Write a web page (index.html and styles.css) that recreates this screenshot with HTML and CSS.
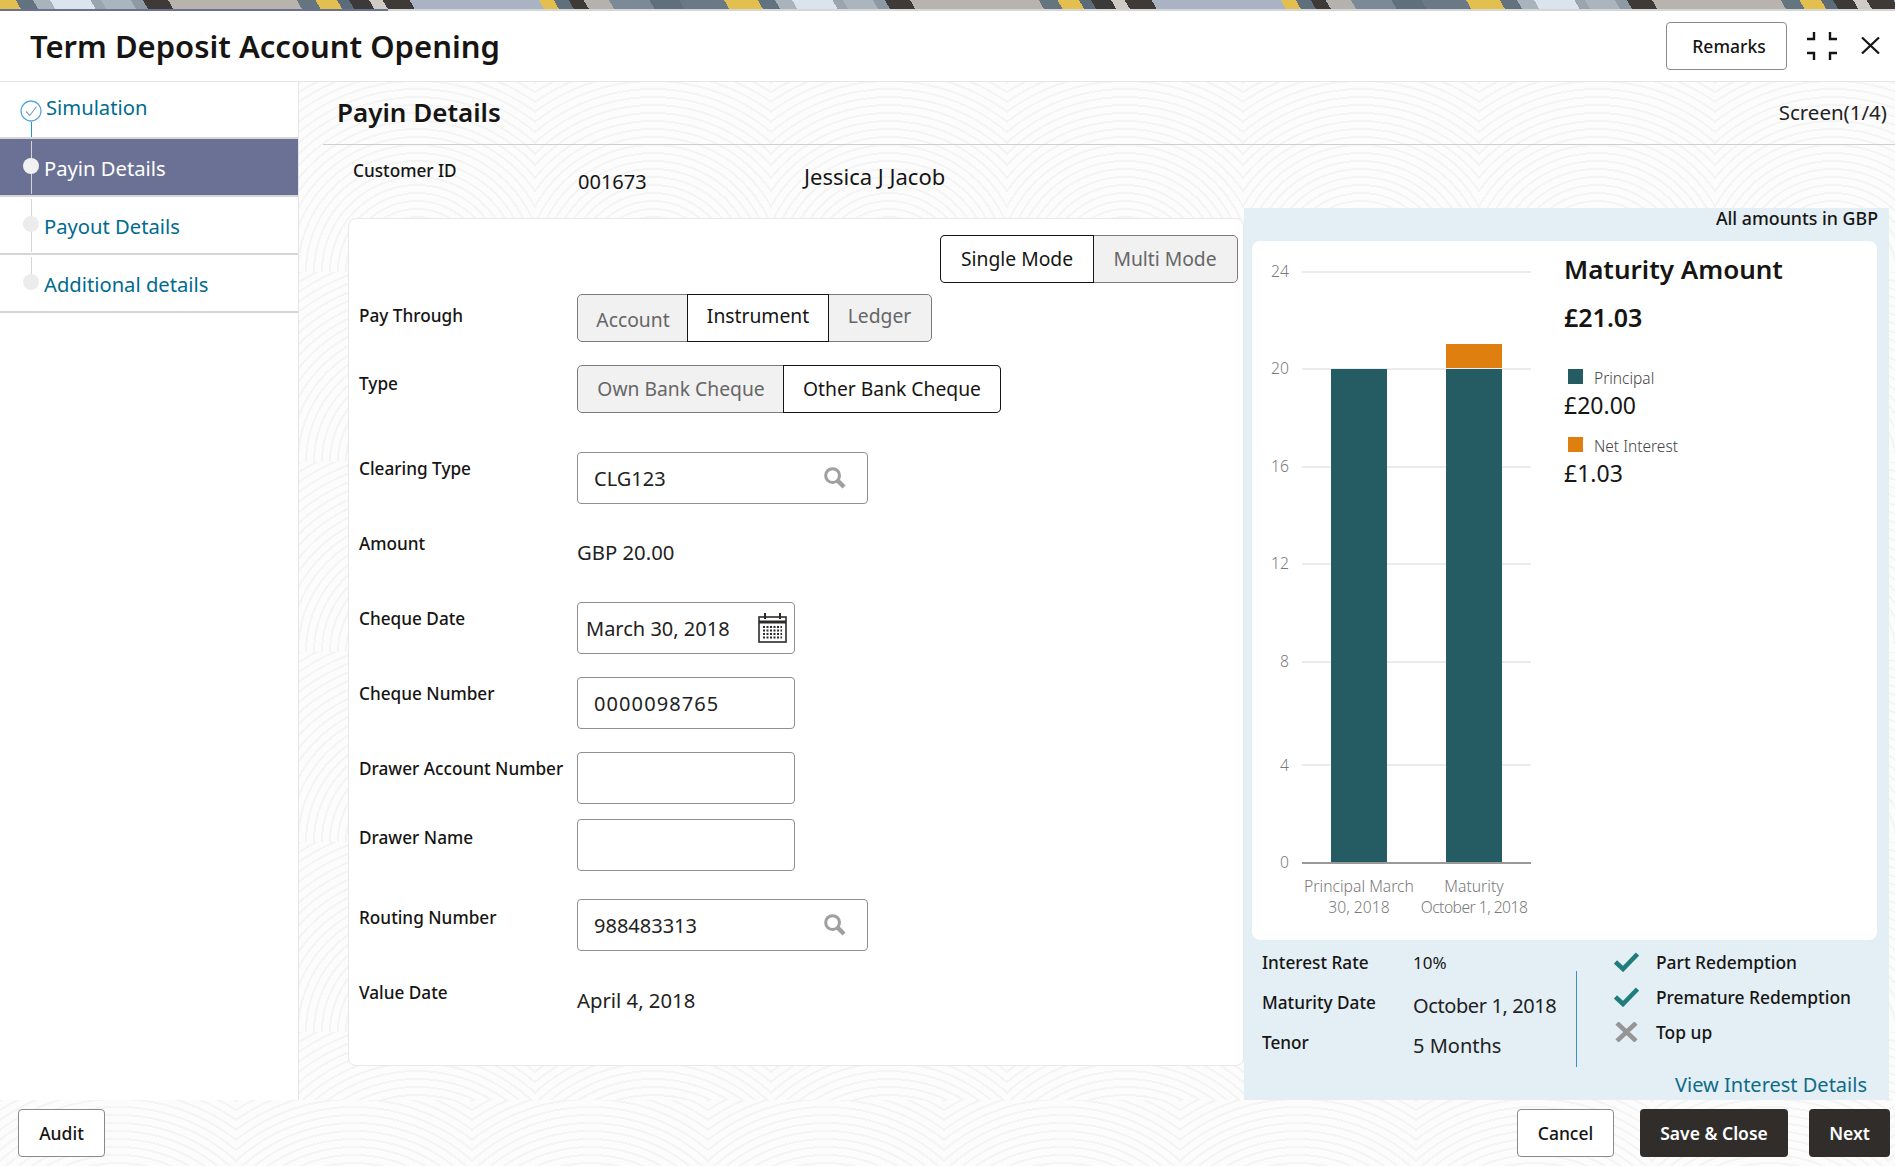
FILE: index.html
```html
<!DOCTYPE html>
<html lang="en">
<head>
<meta charset="utf-8">
<title>Term Deposit Account Opening</title>
<link rel="stylesheet" href="styles.css">
</head>
<body>
<div class="banner"></div>
<div class="progress"><div class="progress-fill"></div></div>
<div class="modal">
  <header class="modal-head">
    <h1 class="modal-title">Term Deposit Account Opening</h1>
    <button class="btn btn-outline btn-remarks">Remarks</button>
    <svg class="icon-shrink" viewBox="0 0 30 28" width="30" height="28" fill="none" stroke="#161513" stroke-width="2.4"><path d="M0 7H7V0M30 7H23V0M0 21H7V28M30 21H23V28"/></svg>
    <svg class="icon-close" viewBox="0 0 19 17" width="19" height="17" fill="none" stroke="#161513" stroke-width="2.2"><path d="M1 0.5L18 16.5M18 0.5L1 16.5"/></svg>
  </header>
  <div class="modal-body">
    <nav class="steps">
      <div class="step step-first">
        <svg class="step-check" viewBox="0 0 22 22" width="22" height="22" fill="none"><circle cx="11" cy="11" r="10" stroke="#56a6de" stroke-width="1.3"/><path d="M6 11.5L9.8 15.5L16.5 6.5" stroke="#7d9db5" stroke-width="1.1"/></svg>
        <a class="step-link step-link-first">Simulation</a>
      </div>
      <div class="step step-active"><span class="step-dot"></span><a class="step-link">Payin Details</a></div>
      <div class="step"><span class="step-dot"></span><a class="step-link">Payout Details</a></div>
      <div class="step step-last"><span class="step-dot"></span><a class="step-link">Additional details</a></div>
    </nav>
    <main class="main">
      <div class="main-head">
        <h2 class="main-title">Payin Details</h2>
        <span class="screen-no">Screen(1/4)</span>
      </div>
      <div class="customer">
        <span class="customer-label">Customer ID</span>
        <span class="customer-id">001673</span>
        <span class="customer-name">Jessica J Jacob</span>
      </div>
      <div class="content">
        <section class="form-card">
          <div class="mode-row">
            <div class="seg seg-mode">
              <span class="seg-item seg-on seg-single">Single Mode</span>
              <span class="seg-item seg-multi">Multi Mode</span>
            </div>
          </div>
          <div class="fields">
            <label class="field-label label-low">Pay Through</label>
            <div class="seg seg-pay">
              <span class="seg-item seg-account">Account</span>
              <span class="seg-item seg-on seg-instrument">Instrument</span>
              <span class="seg-item seg-ledger">Ledger</span>
            </div>
            <label class="field-label label-mid">Type</label>
            <div class="seg seg-type">
              <span class="seg-item seg-own">Own Bank Cheque</span>
              <span class="seg-item seg-on seg-other">Other Bank Cheque</span>
            </div>
            <label class="field-label">Clearing Type</label>
            <div class="input input-lov"><span>CLG123</span>
              <svg class="icon-search" viewBox="0 0 24 24" width="23" height="23" fill="none" stroke="#a0a0a0"><circle cx="10" cy="10" r="7.2" stroke-width="3.2"/><path d="M15.5 15.5L22 22" stroke-width="4.5"/></svg>
            </div>
            <label class="field-label">Amount</label>
            <div class="value">GBP 20.00</div>
            <label class="field-label">Cheque Date</label>
            <div class="input input-date"><span>March 30, 2018</span>
              <svg class="icon-cal" viewBox="0 0 29 30" width="29" height="30" fill="none" stroke="#2c2b29"><rect x="1" y="4" width="27" height="25" stroke-width="1.6"/><path d="M1 9H28" stroke-width="3"/><path d="M7 0V6M22 0V6" stroke-width="2"/><path d="M5 14H24M5 17.500H24M5 21H24M5 24.500H24" stroke-width="2" stroke-dasharray="2 1.500"/></svg>
            </div>
            <label class="field-label">Cheque Number</label>
            <div class="input input-short"><span class="num-wide">0000098765</span></div>
            <label class="field-label">Drawer Account Number</label>
            <div class="input input-short"></div>
            <label class="field-label label-mid">Drawer Name</label>
            <div class="input input-short"></div>
            <label class="field-label label-mid">Routing Number</label>
            <div class="input input-lov"><span>988483313</span>
              <svg class="icon-search" viewBox="0 0 24 24" width="23" height="23" fill="none" stroke="#a0a0a0"><circle cx="10" cy="10" r="7.2" stroke-width="3.2"/><path d="M15.5 15.5L22 22" stroke-width="4.5"/></svg>
            </div>
            <label class="field-label">Value Date</label>
            <div class="value value-last">April 4, 2018</div>
          </div>
        </section>
        <aside class="summary">
          <div class="summary-note">All amounts in GBP</div>
          <div class="chart-card">
            <svg class="chart" viewBox="0 0 312 699" width="312" height="699">
              <g class="grid-lines">
                <path d="M50 31H279M50 128H279M50 226H279M50 323H279M50 421H279M50 524H279"/>
              </g>
              <rect class="bar-teal" x="79" y="128" width="56" height="494"/>
              <rect class="bar-teal" x="194" y="128" width="56" height="494"/>
              <rect class="bar-orange" x="194" y="103" width="56" height="24"/>
              <path class="axis" d="M50 622H279"/>
              <g class="tick" text-anchor="end">
                <text x="37" y="36">24</text>
                <text x="37" y="133">20</text>
                <text x="37" y="231">16</text>
                <text x="37" y="328">12</text>
                <text x="37" y="426">8</text>
                <text x="37" y="530">4</text>
                <text x="37" y="627">0</text>
              </g>
              <g class="tick" text-anchor="middle">
                <text x="107" y="651">Principal March</text>
                <text x="107" y="672">30, 2018</text>
                <text x="222" y="651">Maturity</text>
                <text class="tick-tight" x="222" y="672">October 1, 2018</text>
              </g>
            </svg>
            <div class="chart-side">
              <h3 class="mat-title">Maturity Amount</h3>
              <div class="mat-total">£21.03</div>
              <div class="legend legend-first"><i class="swatch swatch-teal"></i>Principal</div>
              <div class="legend-value">£20.00</div>
              <div class="legend legend-second"><i class="swatch swatch-orange"></i>Net Interest</div>
              <div class="legend-value">£1.03</div>
            </div>
          </div>
          <div class="info">
            <div class="info-grid">
              <span class="info-label">Interest Rate</span><span class="info-small">10%</span>
              <span class="info-label">Maturity Date</span><span class="info-value info-tight">October 1, 2018</span>
              <span class="info-label">Tenor</span><span class="info-value">5 Months</span>
            </div>
            <div class="info-divider"></div>
            <ul class="features">
              <li><svg viewBox="0 0 25 20" width="25" height="20" fill="none" stroke="#1f7d7d" stroke-width="4.500"><path d="M1.500 10L9 17L23.500 2"/></svg>Part Redemption</li>
              <li><svg viewBox="0 0 25 20" width="25" height="20" fill="none" stroke="#1f7d7d" stroke-width="4.500"><path d="M1.500 10L9 17L23.500 2"/></svg>Premature Redemption</li>
              <li><svg viewBox="0 0 25 20" width="25" height="20" fill="none" stroke="#959595" stroke-width="4.500"><path d="M3 1L22 19M22 1L3 19"/></svg>Top up</li>
            </ul>
          </div>
          <a class="view-link">View Interest Details</a>
        </aside>
      </div>
    </main>
  </div>
  <footer class="modal-foot">
    <button class="btn btn-outline btn-audit">Audit</button>
    <span class="foot-spacer"></span>
    <button class="btn btn-outline btn-cancel">Cancel</button>
    <button class="btn btn-dark btn-save">Save &amp; Close</button>
    <button class="btn btn-dark btn-next">Next</button>
  </footer>
</div>
</body>
</html>
```
FILE: styles.css
```css
* { box-sizing: border-box; }
html, body { margin: 0; padding: 0; }
body {
  width: 1895px;
  height: 1166px;
  overflow: hidden;
  font-family: "Noto Sans", "Open Sans", sans-serif;
  color: #161513;
  background: #fff;
}

.banner {
  height: 9px;
  background-image: linear-gradient(60deg,
    #e3bf50 0 2.8%, #62727f 2.8% 5.1%, #a9b3bc 5.1% 7.4%, #dbe3ef 7.4% 12.8%,
    #9aa5af 12.8% 14.2%, #aab5be 14.2% 18.2%, #8d99a3 18.2% 19.8%, #3d3a38 19.8% 23.2%,
    #b8b3ad 23.2% 40.4%, #65757f 40.4% 42.9%, #e3bf50 42.9% 45.8%, #5b6c78 45.8% 47.4%,
    #3c3a38 47.4% 50.1%, #cfcac4 50.1% 51.9%, #3d3a38 51.9% 55.5%, #a9b3c3 55.5% 72.8%,
    #e3bf50 72.8% 74.8%, #5f707c 74.8% 76.8%, #3d3a38 76.8% 78.8%, #b4b2ad 78.8% 82.2%,
    #7b8a96 82.2% 87.6%, #5f707c 87.6% 91.6%, #6a7985 91.6% 97.6%, #e3bf50 97.6% 100%);
  background-size: 742px 100%;
}
.progress { height: 2px; background: #d6d6d6; }
.progress-fill { width: 388px; height: 2px; background: #6b7194; }

.modal { display: flex; flex-direction: column; height: 1155px; }

.modal-head {
  display: flex;
  align-items: center;
  height: 71px;
  flex: none;
  padding: 0 15px 0 30px;
  background: #fff;
  border-bottom: 1px solid #e6e6e6;
}
.modal-title { flex: 1; margin: 0; font-size: 31px; font-weight: 600; }
.icon-shrink { margin-left: 20px; margin-top: -1px; }
.icon-close { margin-left: 24px; margin-top: -1px; }

.btn {
  height: 48px;
  border-radius: 4px;
  font-family: inherit;
  font-size: 17.5px;
  font-weight: 500;
  cursor: pointer;
  padding: 0;
}
.btn-outline { background: #fff; border: 1px solid #8a8a8a; color: #161513; }
.btn-dark { background: #312d2a; border: 0; color: #fff; font-weight: 600; }
.btn-remarks { width: 121px; padding-left: 5px; }
.btn-audit { width: 87px; }
.btn-cancel { width: 97px; }
.btn-save { width: 148px; margin-left: 26px; }
.btn-next { width: 81px; margin-left: 21px; }

.modal-body { display: flex; flex: none; height: 1018px; }

.main, .modal-foot {
  background-color: #fcfcfc;
  background-image: repeating-radial-gradient(circle at 50% 100%, transparent 0 6px, #f4f4f4 6px 8px);
  background-size: 236px 190px;
}

.steps {
  flex: none;
  width: 299px;
  background: #fff;
  border-right: 1px solid #e3e6ec;
}
.step {
  position: relative;
  display: flex;
  align-items: center;
  height: 58px;
  padding: 1px 0 0 44px;
  border-bottom: 2px solid #d6d6d6;
}
.step::before {
  content: "";
  position: absolute;
  left: 31px;
  top: 2px;
  bottom: 1px;
  width: 1px;
  background: #d4d4d4;
}
.step-first { height: 57px; padding-top: 0; }
.step-first::before { top: 38px; bottom: 0; background: #1f9bc4; }
.step-last::before { bottom: 26px; }
.step-check { position: absolute; left: 20px; top: 18px; background: #fff; border-radius: 50%; }
.step-dot {
  position: absolute;
  left: 23px;
  top: 19px;
  width: 16px;
  height: 16px;
  border-radius: 50%;
  background: #ececec;
}
.step-link { font-size: 20.2px; color: #006b8f; }
.step-link-first { margin: -5px 0 0 2px; }
.step-active { background: #6b7194; }
.step-active .step-link { color: #fff; }
.step-active .step-dot { background: #f1f1f1; }

.main { flex: 1; min-width: 0; padding-left: 24px; }
.main-head {
  display: flex;
  align-items: center;
  justify-content: space-between;
  height: 63px;
  padding: 0 8px 2px 14px;
  border-bottom: 1px solid #cfcfcf;
}
.main-title { margin: 0; font-size: 26px; font-weight: 600; }
.screen-no { font-size: 20.5px; color: #222; }

.customer { position: relative; display: flex; height: 73px; padding-left: 30px; }
.customer-label { width: 225px; margin-top: 14px; font-size: 17.2px; font-weight: 500; line-height: 24px; }
.customer-id { width: 226px; margin-top: 24px; font-size: 20px; line-height: 26px; }
.customer-name { margin-top: 18px; font-size: 22px; line-height: 26px; }

.content { display: flex; align-items: flex-start; padding-left: 25px; }

.form-card {
  flex: none;
  width: 896px;
  height: 848px;
  padding: 16px 5px 0 10px;
  background: #fff;
  border: 1px solid #e9e9e9;
  border-radius: 8px;
}
.mode-row { display: flex; justify-content: flex-end; height: 59px; }

.seg {
  display: flex;
  height: 48px;
  border-radius: 5px;
  border: 1px solid #7b7b7b;
  background: #f1f1f1;
  font-size: 19.3px;
  color: #666;
  width: max-content;
}
.seg-item { display: flex; align-items: center; justify-content: center; padding-bottom: 1px; }
.seg-item:first-child { border-radius: 4px 0 0 4px; }
.seg-item:last-child { border-radius: 0 4px 4px 0; }
.seg-on {
  background: #fff;
  color: #161513;
  box-shadow: 0 0 0 1px #161513;
  position: relative;
}
.seg-mode { width: 298px; }
.seg-single { width: 152px; }
.seg-multi { width: 144px; }
.seg-pay { width: 355px; }
.seg-account { width: 110px; padding: 2px 0 0; }
.seg-instrument { width: 140px; padding-bottom: 5px; }
.seg-ledger { width: 103px; padding-bottom: 5px; }
.seg-type { width: 424px; }
.seg-own { width: 206px; }
.seg-other { width: 216px; }

.fields {
  display: grid;
  grid-template-columns: 218px 1fr;
  grid-template-rows: 71px 87px 75px 75px 75px 75px 67px 80px 77px 91px;
}
.field-label {
  padding-top: 5px;
  font-size: 17.2px;
  font-weight: 500;
  line-height: 24px;
  white-space: nowrap;
}
.label-low { padding-top: 10px; }
.label-mid { padding-top: 7px; }

.input {
  display: flex;
  align-items: center;
  justify-content: space-between;
  height: 52px;
  padding: 0 0 0 16px;
  background: #fff;
  border: 1px solid #8f8f8f;
  border-radius: 4px;
  font-size: 20px;
  color: #222;
}
.input-lov { width: 291px; padding-right: 21px; }
.input-short { width: 218px; }
.input-date { width: 218px; padding: 0 7px 0 8px; }
.num-wide { letter-spacing: 1.1px; }
.icon-search { margin-top: -2px; }
.icon-cal { margin-top: 0; }
.value { font-size: 20.3px; color: #222; padding-top: 12px; line-height: 26px; }
.value-last { padding-top: 11px; }

.summary {
  flex: none;
  width: 645px;
  height: 892px;
  margin-top: -10px;
  background: #e3eff5;
  display: flex;
  flex-direction: column;
}
.summary-note {
  height: 33px;
  padding: 0 11px 0 0;
  text-align: right;
  font-size: 17.8px;
  font-weight: 500;
  line-height: 20px;
}
.chart-card {
  display: flex;
  width: 625px;
  height: 699px;
  margin-left: 8px;
  flex: none;
  background: #fff;
  border-radius: 8px;
}
.chart { flex: none; display: block; }
.grid-lines path { stroke: #e9ebef; stroke-width: 2; fill: none; }
.axis { stroke: #999; stroke-width: 2; fill: none; }
.bar-teal { fill: #255c63; }
.bar-orange { fill: #df7f10; }
.tick text { font-size: 15.7px; font-weight: 300; fill: #7a7a7a; font-family: "Noto Sans", sans-serif; }
.tick .tick-tight { letter-spacing: -0.55px; }

.chart-side { flex: 1; padding: 11px 0 0 0; }
.mat-title { margin: 0; font-size: 26px; font-weight: 600; line-height: 34px; }
.mat-total { margin-top: 14px; font-size: 25px; font-weight: 600; line-height: 34px; }
.legend { display: flex; align-items: center; font-size: 15.5px; line-height: 22px; color: #444; font-weight: 300; }
.legend-first { margin-top: 33px; }
.legend-second { margin-top: 14px; }
.swatch { width: 15px; height: 15px; margin: -4px 11px 0 4px; }
.swatch-teal { background: #255c63; }
.swatch-orange { background: #df7f10; }
.legend-value { font-size: 23px; line-height: 32px; }

.info { display: flex; height: 131px; flex: none; padding-left: 18px; }
.info-grid {
  display: grid;
  grid-template-columns: 151px 163px;
  grid-template-rows: 40px 40px 40px;
  align-items: center;
  padding-top: 2px;
}
.info-label { font-size: 17.2px; font-weight: 500; }
.info-small { font-size: 17px; }
.info-value { font-size: 20px; padding-top: 6px; color: #222; }
.info-tight { letter-spacing: -0.4px; }
.info-divider { width: 1px; height: 96px; margin-top: 31px; background: #3f8fc0; }
.features { list-style: none; margin: 4px 0 0 37px; padding: 0; }
.features li {
  display: flex;
  align-items: center;
  height: 35px;
  font-size: 17.4px;
  font-weight: 500;
  gap: 17px;
}
.view-link {
  padding-right: 22px;
  text-align: right;
  font-size: 20px;
  line-height: 28px;
  color: #0f6b87;
}

.modal-foot {
  display: flex;
  align-items: flex-start;
  flex: 1;
  padding: 9px 5px 0 18px;
}
.foot-spacer { flex: 1; }
```
